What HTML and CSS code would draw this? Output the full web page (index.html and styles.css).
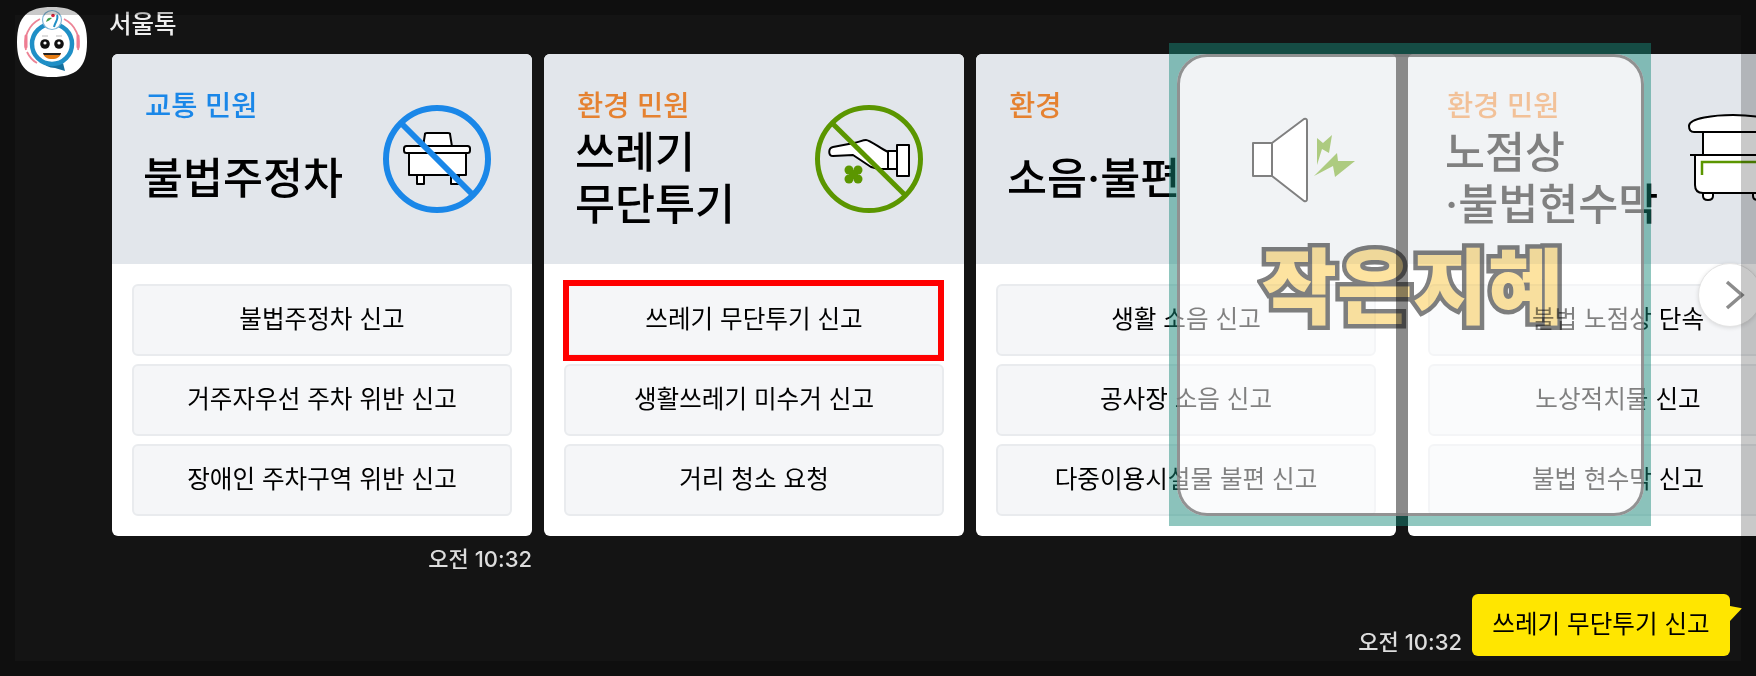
FILE: index.html
```html
<!DOCTYPE html>
<html lang="ko">
<head>
<meta charset="utf-8">
<title>서울톡</title>
<link rel="stylesheet" href="styles.css">
</head>
<body>
<main class="thread">
  <section class="message">
    <svg class="avatar" viewBox="0 0 72 72" aria-hidden="true">
      <path d="M36 1C60 1 71 10 71 36S60 71 36 71 1 62 1 36 12 1 36 1Z" fill="#fff"/>
      <path d="M10 44A27 27 0 0 1 24 13M48 13A27 27 0 0 1 62 44" fill="none" stroke="#ec8496" stroke-width="1.800"/>
      <path d="M10 30v11M62 30v11" stroke="#ee7d92" stroke-width="3" stroke-linecap="round"/>
      <path d="M11 46c3 6 6 9 10 11" fill="none" stroke="#ec8496" stroke-width="1.800"/>
      <path d="M24 54c7 5 16 6 23 3l2 8-10-3c-6 0-11-3-15-8Z" fill="#14709e"/>
      <circle cx="36" cy="38" r="20" fill="#fff" stroke="#1f8fc6" stroke-width="4.500"/>
      <circle cx="36" cy="14" r="9.500" fill="#fff" stroke="#7fb6d6" stroke-width="1.200"/>
      <circle cx="37" cy="9.500" r="1.800" fill="#d9263d"/>
      <path d="M30 16c1-4 3-5 6-4-2 2-4 3-6 4Z" fill="#3c9b4a"/>
      <path d="M41 9c2 4-2 7-3 12" fill="none" stroke="#1f8fc6" stroke-width="2"/>
      <circle cx="29" cy="38" r="4.800" fill="#111"/>
      <circle cx="43" cy="38" r="4.800" fill="#111"/>
      <circle cx="29" cy="37" r="1.600" fill="#fff"/>
      <circle cx="43" cy="37" r="1.600" fill="#fff"/>
      <path d="M27 47h18c-1 4-4 6-9 6s-8-2-9-6Z" fill="#e57c14"/>
      <path d="M27 47h18l-1 2H28Z" fill="#222"/>
      <path d="M26 30h6M40 30h6" stroke="#aaa" stroke-width=".800"/>
    </svg>
    <div class="message-body">
      <h1 class="sender">서울톡</h1>
      <div class="carousel">
        <article class="card">
          <header class="card-head">
            <div class="card-copy">
              <p class="card-label label-blue">교통 민원</p>
              <h2 class="card-title">불법주정차</h2>
            </div>
            <svg class="card-icon" viewBox="0 0 110 110" aria-hidden="true">
              <g fill="#fff" stroke="#000" stroke-width="2" stroke-linejoin="round">
                <path d="M35 71h7v9h-7ZM69 71h8v9h-8Z"/>
                <path d="M40 49l3-19q0-1 2-1h21q2 0 2 1l3 19Z"/>
                <rect x="22" y="42" width="66" height="7" rx="2.500"/>
                <path d="M27 49h57v22H27Z"/>
              </g>
              <circle cx="55" cy="55" r="51" fill="none" stroke="#1a87e8" stroke-width="6"/>
              <path d="M19 19l72 72" stroke="#1a87e8" stroke-width="6"/>
            </svg>
          </header>
          <div class="card-actions">
            <button class="action">불법주정차 신고</button>
            <button class="action">거주자우선 주차 위반 신고</button>
            <button class="action">장애인 주차구역 위반 신고</button>
          </div>
        </article>
        <article class="card">
          <header class="card-head">
            <div class="card-copy">
              <p class="card-label label-orange">환경 민원</p>
              <h2 class="card-title">쓰레기<br>무단투기</h2>
            </div>
            <svg class="card-icon" viewBox="0 0 110 110" aria-hidden="true">
              <g fill="#fff" stroke="#000" stroke-width="2" stroke-linejoin="round">
                <path d="M19 43l21-4c5-1 9-3 12-3 4 0 15 9 22 12v17h-7c-4 0-6-1-10-2L39 51l-20 1c-5 0-5-8 0-9Z"/>
                <rect x="74" y="47" width="9" height="18"/>
                <rect x="83" y="41" width="12" height="31"/>
              </g>
              <g fill="#5b9600">
                <circle cx="35" cy="66" r="4.500"/><circle cx="44" cy="66" r="4.500"/>
                <circle cx="35" cy="75" r="4.500"/><circle cx="44" cy="75" r="4.500"/>
                <circle cx="39.500" cy="70.500" r="4.500"/>
              </g>
              <circle cx="55" cy="55" r="51.500" fill="none" stroke="#5b9600" stroke-width="5"/>
              <path d="M19 20l72 71" stroke="#5b9600" stroke-width="5"/>
            </svg>
          </header>
          <div class="card-actions">
            <button class="action action-marked">쓰레기 무단투기 신고</button>
            <button class="action">생활쓰레기 미수거 신고</button>
            <button class="action">거리 청소 요청</button>
          </div>
        </article>
        <article class="card">
          <header class="card-head">
            <div class="card-copy">
              <p class="card-label label-orange">환경</p>
              <h2 class="card-title">소음·불편</h2>
            </div>
            <svg class="card-icon" viewBox="0 0 110 110" aria-hidden="true">
              <path d="M7 39h19v33H7Z" fill="#fff" stroke="#000" stroke-width="2" stroke-linejoin="round"/>
              <path d="M26 39L58 15q3-1 3 2v78q0 3-3 2L26 72Z" fill="#fff" stroke="#000" stroke-width="2" stroke-linejoin="round"/>
              <path d="M68 72L91 49l1 8h17L89 73l-2-11ZM71 34l6 5 9-8-3 18-7-4-5 16Z" fill="#5b9600"/>
            </svg>
          </header>
          <div class="card-actions">
            <button class="action">생활 소음 신고</button>
            <button class="action">공사장 소음 신고</button>
            <button class="action">다중이용시설물 불편 신고</button>
          </div>
        </article>
        <article class="card card-shifted">
          <header class="card-head">
            <div class="card-copy">
              <p class="card-label label-orange">환경 민원</p>
              <h2 class="card-title">노점상<br>·불법현수막</h2>
            </div>
            <svg class="card-icon" viewBox="0 0 110 110" aria-hidden="true">
              <g fill="#fff" stroke="#000" stroke-width="2" stroke-linejoin="round">
                <path d="M25 28h60v24H25Z"/>
                <path d="M11 22c0-8 26-11 44-11s44 3 44 11c0 4-2 6-5 6H16c-3 0-5-2-5-6Z"/>
                <path d="M25 89h10v3q0 4-5 4t-5-4ZM75 89h10v3q0 4-5 4t-5-4Z"/>
                <path d="M17 51h76v30q0 8-8 8H25q-8 0-8-8Z"/>
                <path d="M12 51h86" fill="none"/>
              </g>
              <path d="M24 71V58h62v13" fill="none" stroke="#5b9600" stroke-width="2.500"/>
            </svg>
          </header>
          <div class="card-actions">
            <button class="action">불법 노점상 단속</button>
            <button class="action">노상적치물 신고</button>
            <button class="action">불법 현수막 신고</button>
          </div>
        </article>
      </div>
      <time class="time time-received">오전 10:32</time>
    </div>
  </section>
  <section class="sent">
    <time class="time">오전 10:32</time>
    <p class="bubble">쓰레기 무단투기 신고</p>
  </section>
</main>

<button class="carousel-next" aria-label="다음">
  <svg viewBox="0 0 20 30" aria-hidden="true"><path d="M2 2l15 13L2 28" fill="none" stroke="#8c8c8c" stroke-width="3.500"/></svg>
</button>

<div class="watermark">
  <div class="watermark-window"></div>
  <span class="watermark-text">작은지혜</span>
</div>
<div class="screen-frame"></div>
</body>
</html>
```
FILE: styles.css
```css
* { box-sizing: border-box; }
html, body { height: 100%; }
body {
  margin: 0;
  width: 1756px;
  height: 676px;
  overflow: hidden;
  position: relative;
  background: #141414;
  color: #000;
  font-family: Inter, "Noto Sans CJK KR", sans-serif;
}
p, h1, h2 { margin: 0; font: inherit; }

.thread { display: flex; flex-direction: column; }
.message { display: flex; gap: 24px; padding: 6px 0 0 16px; }
.avatar { flex: none; width: 72px; height: 72px; }
.message-body { flex: 1; min-width: 0; display: flex; flex-direction: column; }
.sender {
  height: 48px;
  margin-left: -3px;
  padding-top: 3px;
  font-size: 24.5px;
  line-height: 30px;
  font-weight: 500;
  color: #eee;
}

.carousel { display: flex; gap: 12px; overflow: hidden; }
.card { flex: 0 0 420px; height: 482px; border-radius: 6px; overflow: hidden; background: #fff; }
.card-head {
  height: 210px;
  display: flex;
  justify-content: space-between;
  align-items: center;
  padding: 0 40px 0 31px;
  background: #e2e6eb;
}
.card-copy { align-self: flex-start; padding-top: 34px; }
.card-shifted .card-copy { padding-left: 6px; }
.card-label { padding-left: 2px; font-size: 28.5px; line-height: 36px; font-weight: 500; }
.label-blue { color: #1a87e8; }
.label-orange { color: #e58231; }
.card-title {
  min-height: 107px;
  display: flex;
  align-items: center;
  font-size: 43.5px;
  line-height: 52px;
  font-weight: 500;
}
.card-icon { flex: none; width: 110px; height: 110px; }

.card-actions { display: flex; flex-direction: column; gap: 8px; padding: 20px; }
.action {
  height: 72px;
  padding: 0 0 7px;
  border: 2px solid #e9ebee;
  border-radius: 6px;
  background: #f5f6f8;
  color: #000;
  font: 400 24.6px "Noto Sans CJK KR", sans-serif;
}
.action-marked { position: relative; }
.action-marked::after {
  content: "";
  position: absolute;
  inset: -6px -2px -7px -3px;
  border: 6px solid #f00;
}

.time { font-size: 22px; line-height: 28px; font-weight: 500; color: #ddd; }
.time-received { width: 420px; margin-top: 9px; text-align: right; }

.sent {
  display: flex;
  justify-content: flex-end;
  align-items: flex-end;
  gap: 10px;
  margin-top: 21px;
  padding-right: 26px;
}
.bubble {
  position: relative;
  width: 258px;
  height: 62px;
  border-radius: 6px;
  background: #ffe600;
  font: 400 24.6px/56px "Noto Sans CJK KR", sans-serif;
  text-align: center;
}
.bubble::after {
  content: "";
  position: absolute;
  top: 12px;
  left: 100%;
  width: 12px;
  height: 15px;
  background: #ffe600;
  clip-path: polygon(0 0, 100% 15%, 0 100%);
}

.carousel-next {
  position: absolute;
  left: 1698px;
  top: 263px;
  width: 64px;
  height: 64px;
  padding: 0 0 0 26px;
  border: 1px solid #e4e4e4;
  border-radius: 50%;
  background: #fff;
  box-shadow: 0 1px 4px rgba(0, 0, 0, .12);
}
.carousel-next svg { display: block; width: 20px; height: 30px; }

.watermark {
  position: absolute;
  left: 1169px;
  top: 43px;
  width: 482px;
  height: 483px;
  overflow: hidden;
  display: flex;
  align-items: center;
  justify-content: center;
}
.watermark-window {
  position: absolute;
  inset: 11px 7px 10px 8px;
  border: 3px solid rgba(120, 120, 120, .8);
  border-radius: 30px;
  background: rgba(255, 255, 255, .5);
  box-shadow: 0 0 0 60px rgba(24, 137, 122, .48);
}
.watermark-text {
  position: relative;
  padding: 0 0 5px 5px;
  font: 900 82px/1 "Noto Sans CJK KR", sans-serif;
  color: #fde3a0;
  -webkit-text-stroke: 9px #808080;
  paint-order: stroke fill;
  mix-blend-mode: multiply;
}

.screen-frame {
  position: absolute;
  inset: 0;
  border: 15px solid rgba(0, 0, 0, .21);
  pointer-events: none;
}
```
